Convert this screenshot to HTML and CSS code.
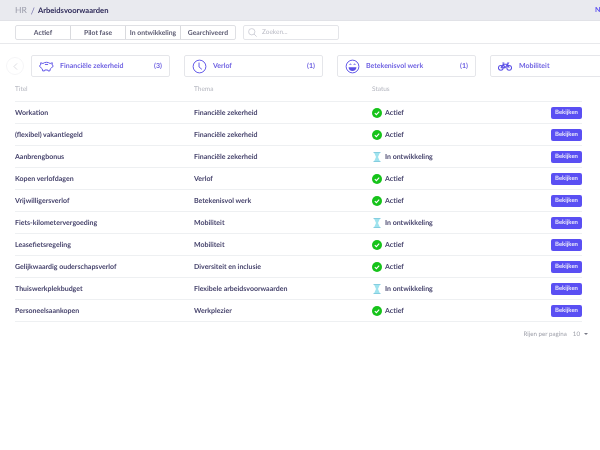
FILE: index.html
```html
<!DOCTYPE html>
<html lang="nl">
<head>
<meta charset="utf-8">
<title>Arbeidsvoorwaarden</title>
<link rel="stylesheet" href="styles.css">
</head>
<body>
<div class="page">
<header class="topbar">
  <div class="crumbs"><span class="crumb-root">HR</span><span class="crumb-sep">/</span><span class="crumb-current">Arbeidsvoorwaarden</span></div>
  <span class="top-link">Nieuw</span>
</header>
<nav class="filterbar">
  <div class="tabs">
    <span class="tab">Actief</span><span class="tab">Pilot fase</span><span class="tab">In ontwikkeling</span><span class="tab">Gearchiveerd</span>
  </div>
  <div class="search">
    <svg class="search-icon" viewBox="0 0 12 12"><circle cx="5" cy="5" r="4.200"/><path d="M8 8l3.500 3.500"/></svg>
    <span>Zoeken...</span>
  </div>
</nav>
<section class="themes">
  <div class="back"><svg viewBox="0 0 8 12"><path d="M6.500 1L1.500 6l5 5"/></svg></div>
  <div class="card">
    <svg class="card-icon" viewBox="0 0 16 14"><path d="M1.800 3l2.400.8C5.200 3 6.500 2.500 8 2.500s2.800.5 3.800 1.300l2.400-.8-.3 2.300c.8.3 1.300.7 1.300 1.200s-.6 1-1.500 1.300c-.4.8-1 1.400-1.700 1.800l-.4 2.100h-2l-.3-1H6.200l-.3 1h-2l-.4-2.100c-.7-.4-1.300-1-1.700-1.800C1.100 7.500.5 7 .5 6.500S1 5.600 1.800 5.300z"/><path d="M6.300 4.800h3.400"/></svg>
    <span class="card-name">Financiële zekerheid</span><span class="card-count">(3)</span>
  </div>
  <div class="card">
    <svg class="card-icon" viewBox="0 0 16 16"><circle cx="8" cy="8" r="6.800"/><path d="M7.500 3.800v4.700l3 2.500"/></svg>
    <span class="card-name">Verlof</span><span class="card-count">(1)</span>
  </div>
  <div class="card">
    <svg class="card-icon" viewBox="0 0 16 16"><circle cx="8" cy="8" r="6.800"/><path class="fill" d="M3.800 8.800h8.400c0 2.400-1.900 3.900-4.200 3.900s-4.200-1.500-4.200-3.900z"/><path d="M4.800 6.200c.4-1 1.600-1 2 0M9.200 6.200c.4-1 1.600-1 2 0"/></svg>
    <span class="card-name">Betekenisvol werk</span><span class="card-count">(1)</span>
  </div>
  <div class="card">
    <svg class="card-icon bike" viewBox="0 0 16 10"><circle cx="3.200" cy="6.500" r="2.700"/><circle cx="12.800" cy="6.500" r="2.700"/><path d="M3.200 6.500L6 2.500h5l1.800 4M6 2.500l2 4 3-4M3.200 6.500H8M5 1h2.200M10.500 1H12l-1 1.500"/></svg>
    <span class="card-name">Mobiliteit</span>
  </div>
</section>
<section class="table">
  <div class="row head"><span>Titel</span><span>Thema</span><span>Status</span><span></span></div>
  <div class="row"><span>Workation</span><span>Financiële zekerheid</span><span class="status"><svg class="st" viewBox="0 0 10 10"><circle class="ok" cx="5" cy="5" r="5"/><path class="tick" d="M2.800 5.100l1.600 1.500 2.800-3"/></svg>Actief</span><span class="btn">Bekijken</span></div>
  <div class="row"><span>(flexibel) vakantiegeld</span><span>Financiële zekerheid</span><span class="status"><svg class="st" viewBox="0 0 10 10"><circle class="ok" cx="5" cy="5" r="5"/><path class="tick" d="M2.800 5.100l1.600 1.500 2.800-3"/></svg>Actief</span><span class="btn">Bekijken</span></div>
  <div class="row"><span>Aanbrengbonus</span><span>Financiële zekerheid</span><span class="status"><svg class="st" viewBox="0 0 10 10"><path class="glass" d="M2 .5h6L6 5l2 4.500H2L4 5z"/><path class="frame" d="M1.500.5h7M1.500 9.500h7"/></svg>In ontwikkeling</span><span class="btn">Bekijken</span></div>
  <div class="row"><span>Kopen verlofdagen</span><span>Verlof</span><span class="status"><svg class="st" viewBox="0 0 10 10"><circle class="ok" cx="5" cy="5" r="5"/><path class="tick" d="M2.800 5.100l1.600 1.500 2.800-3"/></svg>Actief</span><span class="btn">Bekijken</span></div>
  <div class="row"><span>Vrijwilligersverlof</span><span>Betekenisvol werk</span><span class="status"><svg class="st" viewBox="0 0 10 10"><circle class="ok" cx="5" cy="5" r="5"/><path class="tick" d="M2.800 5.100l1.600 1.500 2.800-3"/></svg>Actief</span><span class="btn">Bekijken</span></div>
  <div class="row"><span>Fiets-kilometervergoeding</span><span>Mobiliteit</span><span class="status"><svg class="st" viewBox="0 0 10 10"><path class="glass" d="M2 .5h6L6 5l2 4.500H2L4 5z"/><path class="frame" d="M1.500.5h7M1.500 9.500h7"/></svg>In ontwikkeling</span><span class="btn">Bekijken</span></div>
  <div class="row"><span>Leasefietsregeling</span><span>Mobiliteit</span><span class="status"><svg class="st" viewBox="0 0 10 10"><circle class="ok" cx="5" cy="5" r="5"/><path class="tick" d="M2.800 5.100l1.600 1.500 2.800-3"/></svg>Actief</span><span class="btn">Bekijken</span></div>
  <div class="row"><span>Gelijkwaardig ouderschapsverlof</span><span>Diversiteit en inclusie</span><span class="status"><svg class="st" viewBox="0 0 10 10"><circle class="ok" cx="5" cy="5" r="5"/><path class="tick" d="M2.800 5.100l1.600 1.500 2.800-3"/></svg>Actief</span><span class="btn">Bekijken</span></div>
  <div class="row"><span>Thuiswerkplekbudget</span><span>Flexibele arbeidsvoorwaarden</span><span class="status"><svg class="st" viewBox="0 0 10 10"><path class="glass" d="M2 .5h6L6 5l2 4.500H2L4 5z"/><path class="frame" d="M1.500.5h7M1.500 9.500h7"/></svg>In ontwikkeling</span><span class="btn">Bekijken</span></div>
  <div class="row"><span>Personeelsaankopen</span><span>Werkplezier</span><span class="status"><svg class="st" viewBox="0 0 10 10"><circle class="ok" cx="5" cy="5" r="5"/><path class="tick" d="M2.800 5.100l1.600 1.500 2.800-3"/></svg>Actief</span><span class="btn">Bekijken</span></div>
</section>
<footer class="pager"><span>Rijen per pagina</span><span class="pager-num">10</span><span class="caret"></span></footer>
</div>
</body>
</html>
```
FILE: styles.css
```css
* { box-sizing: border-box; }
html, body { margin: 0; height: 100%; overflow: hidden; }
body { background: #fff; font-family: "Lato", sans-serif; font-size: 7px; color: #34305c; text-rendering: geometricPrecision; }
.page { width: 600px; height: 450px; will-change: transform; }
.topbar { height: 21px; background: #e9eaef; border-bottom: 1px solid #e1e2e7; display: flex; align-items: center; justify-content: space-between; padding-left: 15px; overflow: hidden; }
.crumbs { display: flex; align-items: center; }
.crumb-root { color: #9a9cab; font-size: 8.500px; }
.crumb-sep { color: #6d6aa8; font-size: 9px; margin: 0 3px 0 4px; }
.crumb-current { font-weight: 700; color: #2f2b5a; font-size: 7.600px; }
.top-link { color: #5b50f0; font-weight: 700; width: 5px; overflow: hidden; white-space: nowrap; }
.filterbar { height: 23px; border-bottom: 1px solid #e8e9ec; display: flex; align-items: flex-start; padding: 4px 0 0 15px; gap: 7px; }
.tabs { display: flex; height: 15px; width: 221px; border: 1px solid #dfe0e4; border-radius: 2px; }
.tab { flex: 1; display: flex; align-items: center; justify-content: center; border-right: 1px solid #d9dade; font-weight: 700; color: #5c5b72; font-size: 6.800px; white-space: nowrap; }
.tab:last-child { border-right: 0; }
.search { width: 96px; height: 15px; border: 1px solid #e4e5e9; border-radius: 2px; display: flex; align-items: center; padding-left: 4px; gap: 5px; color: #b9bac4; font-size: 6.500px; }
.search-icon { width: 9px; height: 9px; fill: none; stroke: #c3c4cd; stroke-width: 1; }
.themes { display: flex; align-items: center; gap: 14px; padding-top: 11px; overflow: hidden; width: 600px; height: 33px; position: relative; padding-left: 31px; }
.back { position: absolute; left: 6px; top: 13px; width: 18px; height: 18px; border-radius: 50%; border: 1px solid #f5f5f7; display: flex; align-items: center; justify-content: center; }
.back svg { width: 5px; height: 9px; fill: none; stroke: #c9cad1; stroke-width: 1; }
.card { flex: 0 0 139px; height: 22px; border: 1px solid #e5e6ea; border-radius: 2px; display: flex; align-items: center; padding: 0 7px; color: #6f62e2; font-weight: 700; }
.card-icon { width: 15px; height: 15px; margin-right: 6px; fill: none; stroke: #5b50e6; stroke-width: 1; flex: none; }
.card-icon.bike { width: 14px; margin-right: 7px; stroke-width: 1.200; }
.card-icon .fill { fill: #5b50e6; stroke: none; }
.card-name { flex: 1; white-space: nowrap; }
.table { margin: 0 18px 0 15px; }
.row { display: grid; grid-template-columns: 179px 178px 1fr 31px; align-items: center; height: 22px; border-bottom: 1px solid #eef0f2; color: #46436c; font-weight: 700; }
.row.head { height: 25px; color: #b4b6bf; font-weight: 400; font-size: 6.500px; }
.status { display: flex; align-items: center; gap: 3px; }
.st { width: 10px; height: 10px; flex: none; }
.ok { fill: #16c31a; }
.tick { fill: none; stroke: #fff; stroke-width: 1.100; }
.glass { fill: #9fe3ee; }
.frame { fill: none; stroke: #7cc8dd; stroke-width: .9; }
.btn { height: 12px; background: #5a4ff3; color: #e8e7fb; border-radius: 2px; font-size: 6px; font-weight: 700; display: flex; align-items: center; justify-content: center; }
.pager { display: flex; align-items: center; justify-content: flex-end; height: 24px; padding-right: 12px; color: #9fa1ab; font-size: 6.200px; }
.pager-num { margin-left: 6px; }
.caret { margin-left: 4px; width: 0; height: 0; border: 2.500px solid transparent; border-top-color: #777885; border-bottom: 0; }
```
